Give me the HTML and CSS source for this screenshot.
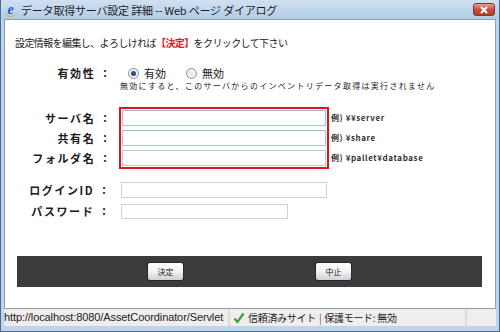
FILE: index.html
```html
<!DOCTYPE html>
<html lang="ja">
<head>
  <meta charset="UTF-8">
  <title>データ取得サーバ設定 詳細</title>
  <link rel="stylesheet" href="styles.css">
</head>
<body>
  <div class="window">
    <div class="titlebar">
      <span class="ie-icon">e</span>
      <span class="title">データ取得サーバ設定 詳細 -- Web ページ ダイアログ</span>
      <span class="close">
        <svg width="12" height="8" viewBox="0 0 12 8"><path d="M3 1 L9 7 M9 1 L3 7" stroke="#fff" stroke-width="2"/></svg>
      </span>
    </div>

    <div class="content">
      <p class="intro">設定情報を編集し、よろしければ<span class="red">【決定】</span>をクリックして下さい</p>

      <div class="row enable">
        <div class="label">有効性 ：</div>
        <div class="radios">
          <span class="radio checked"></span><span class="radio-text">有効</span>
          <span class="radio"></span><span class="radio-text">無効</span>
        </div>
      </div>
      <div class="note">無効にすると、このサーバからのインベントリデータ取得は実行されません</div>

      <div class="server-group">
        <div class="labels">
          <div class="label">サーバ名 ：</div>
          <div class="label">共有名 ：</div>
          <div class="label">フォルダ名 ：</div>
        </div>
        <div class="required">
          <input type="text" class="blue">
          <input type="text" class="blue">
          <input type="text">
        </div>
        <div class="examples">
          <div>例) ¥¥server</div>
          <div>例) ¥share</div>
          <div>例) ¥pallet¥database</div>
        </div>
      </div>

      <div class="row login">
        <div class="label">ログインID ：</div>
        <input type="text" class="long">
      </div>
      <div class="row login">
        <div class="label">パスワード ：</div>
        <input type="password" class="short">
      </div>

      <div class="actions">
        <button>決定</button>
        <button>中止</button>
      </div>
    </div>

    <div class="statusbar">
      <div class="url">http://localhost:8080/AssetCoordinator/Servlet</div>
      <div class="zone">
        <svg width="12" height="12" viewBox="0 0 12 12"><path d="M1.5 6.5 L4.5 10 L10.5 1.5" fill="none" stroke="#3aa43a" stroke-width="2.2"/></svg>
        信頼済みサイト <span class="pipe">|</span> 保護モード: 無効
      </div>
      <div class="blank"></div>
    </div>
  </div>
</body>
</html>
```

FILE: styles.css
```css
body {
  margin: 0;
  width: 500px;
  height: 332px;
  overflow: hidden;
  font-family: "Noto Sans CJK JP", "Liberation Sans", sans-serif;
  color: #1a1a1a;
}
.window {
  width: 500px;
  height: 332px;
  box-sizing: border-box;
  background: #bcd4ec;
  border: 1px solid #4e6a8c;
  border-top: none;
  padding: 0 3px 3px;
  display: flex;
  flex-direction: column;
}
.titlebar {
  height: 19px;
  margin: 0 -3px;
  padding: 0 3px;
  background: linear-gradient(to bottom, #cfe0f2, #b3cce7);
  display: flex;
  align-items: center;
  gap: 4px;
}
.ie-icon {
  width: 13px;
  height: 14px;
  font: italic bold 14px "Liberation Serif", serif;
  color: #1f5fc4;
  line-height: 13px;
  text-align: center;
  border-radius: 50%;
  box-shadow: inset 0 -2px 0 -1px #f0a020;
}
.title {
  font-size: 11px;
  color: #1e1e1e;
  flex: 1;
  letter-spacing: -0.2px;
}
.close {
  width: 22px;
  height: 13px;
  margin-right: 1px;
  border: 1px solid #7a3a32;
  border-radius: 3px;
  background: linear-gradient(to bottom, #e8a194, #c9503e 50%, #b83a28);
  display: flex;
  align-items: center;
  justify-content: center;
  box-sizing: border-box;
}
.content {
  flex: 1;
  background: #fff;
  border: 1px solid #8aa0b8;
  border-bottom: none;
  position: relative;
}
.intro {
  margin: 16px 0 0 10px;
  font-size: 10px;
  line-height: 14px;
  letter-spacing: -0.6px;
}
.red {
  color: #e01a1a;
  font-weight: bold;
}
.row {
  display: flex;
  align-items: center;
}
.label {
  width: 107px;
  text-align: right;
  font-size: 11px;
  font-weight: bold;
  letter-spacing: 1.6px;
  white-space: nowrap;
  flex-shrink: 0;
}
.enable {
  margin-top: 16px;
  height: 14px;
}
.radios {
  display: flex;
  align-items: center;
  margin-left: 16px;
  font-size: 11px;
}
.radio {
  width: 9px;
  height: 9px;
  border: 1px solid #8e8f8f;
  border-radius: 50%;
  background: radial-gradient(circle, #e8e8e8, #f8f8f8);
  position: relative;
}
.radio.checked::after {
  content: "";
  position: absolute;
  left: 2px;
  top: 2px;
  width: 5px;
  height: 5px;
  border-radius: 50%;
  background: #2a4f9e;
}
.radio-text {
  margin: 0 20px 0 5px;
}
.note {
  margin: 0 0 0 115px;
  font-size: 8px;
  letter-spacing: 1.3px;
  line-height: 12px;
}
.server-group {
  display: flex;
  margin-top: 15px;
}
.labels, .examples {
  display: flex;
  flex-direction: column;
  gap: 4px;
  padding-top: 3px;
}
.labels .label {
  height: 16px;
  line-height: 16px;
}
.required {
  margin-left: 7px;
  border: 2px solid #e0131c;
  padding: 1px;
  display: flex;
  flex-direction: column;
  gap: 4px;
}
input {
  box-sizing: border-box;
  margin: 0;
  border: 1px solid #c9c9c9;
  font-size: 10px;
  padding: 0 2px;
}
.required input {
  width: 204px;
  height: 16px;
}
.required input.blue {
  border-color: #a9c3dc;
  border-top-color: #a0b8d0;
}
.examples {
  margin-left: 2px;
  font-size: 8px;
  font-weight: bold;
  letter-spacing: 0.6px;
  color: #333;
}
.examples div {
  height: 16px;
  line-height: 16px;
}
.login {
  margin-top: 5px;
  height: 16px;
}
.server-group + .login {
  margin-top: 13px;
}
.login .label {
  width: 106px;
}
.login input {
  margin-left: 10px;
  height: 16px;
  border-color: #d0d0d0;
}
.login input.long {
  width: 206px;
}
.login input.short {
  width: 167px;
  height: 15px;
}
.actions {
  margin: 37px 13px 0 12px;
  height: 31px;
  background: #3b3b3b;
  display: flex;
  align-items: center;
  justify-content: center;
  gap: 131px;
}
button {
  width: 37px;
  height: 19px;
  border: 1px solid #2a2a2a;
  border-radius: 3px;
  background: linear-gradient(to bottom, #ffffff, #f2f2f2 50%, #cfd0d8);
  font-family: "Noto Sans CJK JP", sans-serif;
  font-size: 8px;
  padding: 0;
  color: #222;
}
.statusbar {
  height: 17px;
  margin: 0 0 2px;
  border-top: 1px solid #9a9a9a;
  background: #f0eeec;
  display: flex;
  font-family: "Liberation Sans", "Noto Sans CJK JP", sans-serif;
  font-size: 11px;
  line-height: 17px;
  color: #222;
}
.url {
  width: 224px;
  border-right: 2px solid #dcdad8;
  white-space: nowrap;
  letter-spacing: -0.1px;
}
.zone {
  width: 232px;
  padding-left: 3px;
  font-family: "Noto Sans CJK JP", sans-serif;
  font-size: 10px;
  letter-spacing: -0.3px;
  border-right: 2px solid #dcdad8;
  display: flex;
  align-items: center;
  gap: 3px;
  white-space: nowrap;
}
.zone svg {
  flex-shrink: 0;
}
.pipe {
  color: #a03070;
}
.blank {
  flex: 1;
}
```
